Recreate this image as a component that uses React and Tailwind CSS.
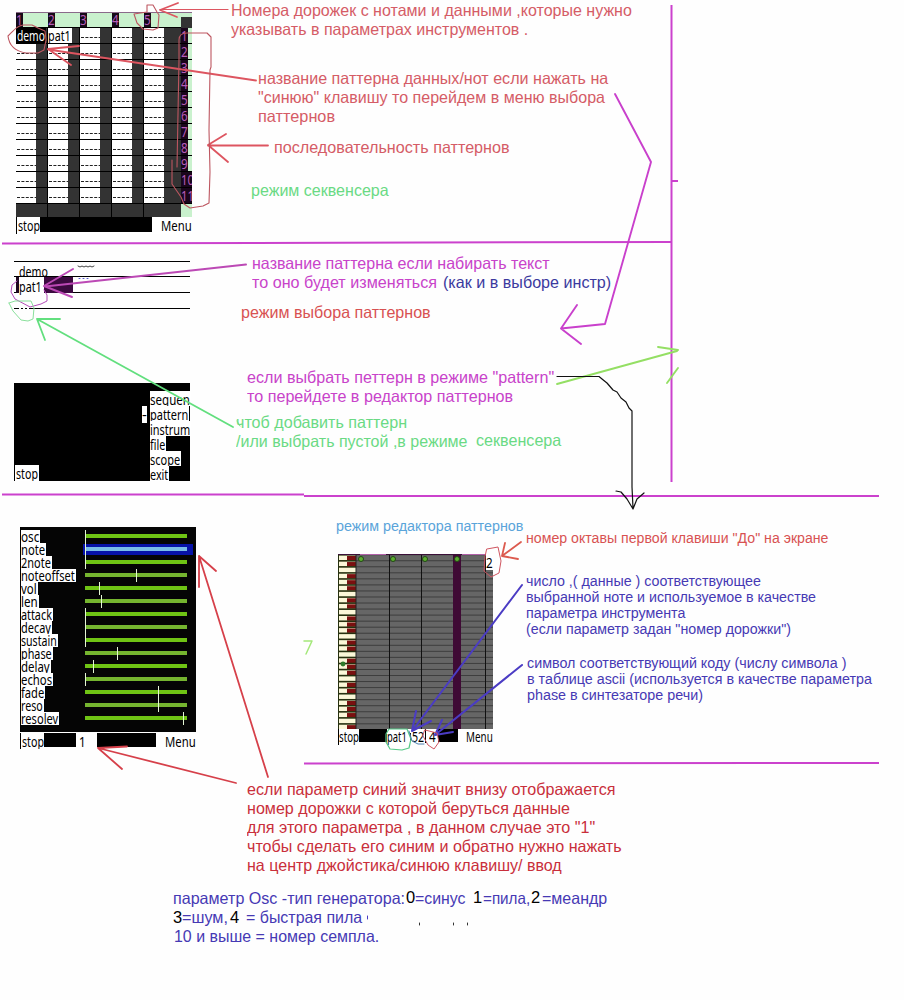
import { useLayoutEffect, useRef, useState } from "react";

/* Text squeezed or stretched horizontally to an exact width. */
function Fit({ w, className = "", children }) {
  const ref = useRef(null);
  const [scale, setScale] = useState(1);
  useLayoutEffect(() => {
    const natural = ref.current.offsetWidth;
    if (natural) setScale(w / natural);
  }, [w, children]);
  return (
    <span className="block overflow-visible" style={{ width: w }}>
      <span
        ref={ref}
        className={"inline-block origin-left whitespace-pre " + className}
        style={{ transform: `scaleX(${scale})` }}
      >
        {children}
      </span>
    </span>
  );
}

const salmon = "text-[#d55c66]";
const green = "text-[#6ada84]";
const magenta = "text-[#c843ca]";
const indigo = "text-[#4639b4]";
const red = "text-[#c92f3b]";
const coral = "text-[#d85252]";
const big = "text-[16.5px] leading-[19px]";
const small = "text-[14px] leading-4";

/* Notes on the canvas: [x, baseline, width, size, colour, text] */
const notes = [
  [231, 16, 401, big, salmon, "Номера дорожек с нотами и данными ,которые нужно"],
  [231, 35, 297, big, salmon, "указывать в параметрах инструментов ."],
  [258, 84, 350, big, salmon, "название паттерна данных/нот если нажать на"],
  [258, 103, 347, big, salmon, "\"синюю\" клавишу то перейдем в меню выбора"],
  [258, 122, 77, big, salmon, "паттернов"],
  [274, 153, 236, big, salmon, "последовательность паттернов"],
  [251, 196, 138, big, green, "режим секвенсера"],
  [252, 269, 298, big, magenta, "название паттерна если набирать текст"],
  [252, 288, 185, big, magenta, "то оно будет изменяться"],
  [443, 288, 168, big, "text-[#3b3a9e]", "(как и в выборе инстр)"],
  [241, 318, 190, big, coral, "режим выбора паттернов"],
  [247, 383, 307, big, magenta, "если выбрать петтерн в режиме \"pattern\""],
  [247, 402, 266, big, magenta, "то перейдете в редактор паттернов"],
  [236, 428, 171, big, green, "чтоб добавить паттерн"],
  [236, 447, 232, big, green, "/или выбрать пустой ,в режиме"],
  [476, 446, 85, big, green, "секвенсера"],
  [336, 531, 187, small, "text-[#5aa4da]", "режим редактора паттернов"],
  [526, 543, 303, small, coral, "номер октавы первой клавиши \"До\" на экране"],
  [526, 586, 235, small, indigo, "число ,( данные ) соответствующее"],
  [526, 602, 290, small, indigo, "выбранной ноте и используемое в качестве"],
  [526, 618, 159, small, indigo, "параметра инструмента"],
  [526, 634, 265, small, indigo, "(если параметр задан \"номер дорожки\")"],
  [527, 668, 319, small, indigo, "символ соответствующий коду (числу символа )"],
  [527, 684, 345, small, indigo, "в таблице ascii (используется в качестве параметра"],
  [527, 700, 176, small, indigo, "phase в синтезаторе речи)"],
  [247, 795, 369, big, red, "если параметр синий значит внизу отображается"],
  [247, 814, 323, big, red, "номер дорожки с которой беруться данные"],
  [247, 833, 348, big, red, "для этого параметра , в данном случае это \"1\""],
  [247, 852, 375, big, red, "чтобы сделать его синим и обратно нужно нажать"],
  [247, 871, 315, big, red, "на центр джойстика/синюю клавишу/ ввод"],
  [173, 904, 232, big, indigo, "параметр Osc -тип генератора:"],
  [406, 903, 9, big, "text-black", "0"],
  [415, 904, 51, big, indigo, "=синус"],
  [473, 903, 9, big, "text-black", "1"],
  [483, 904, 47, big, indigo, "=пила,"],
  [531, 903, 9, big, "text-black", "2"],
  [542, 904, 65, big, indigo, "=меандр"],
  [173, 923, 9, big, "text-black", "3"],
  [182, 923, 46, big, indigo, "=шум,"],
  [230, 923, 9, big, "text-black", "4"],
  [246, 923, 116, big, indigo, "= быстрая пила"],
  [174, 942, 205, big, indigo, "10 и выше = номер семпла."],
];

function Note({ note }) {
  const [x, baseline, w, size, color, text] = note;
  const top = baseline - (size === big ? 15 : 13);
  return (
    <div className={"absolute " + size + " " + color} style={{ left: x, top }}>
      <Fit w={w}>{text}</Fit>
    </div>
  );
}

const lcd = "font-['Noto_Sans','Open_Sans',sans-serif] text-[15px]";

function Label({ w, box, className = "", children }) {
  return (
    <div
      className={"shrink-0 overflow-hidden whitespace-pre " + className}
      style={{ width: box || w + 1 }}
    >
      <Fit w={w}>{children}</Fit>
    </div>
  );
}

function Sequencer() {
  const tracks = [1, 2, 3, 4, 5];
  const rows = Array.from({ length: 11 }, (_, i) => i + 1);
  return (
    <div className={"absolute left-4 top-3 w-44 h-[222px] overflow-hidden bg-white " + lcd}>
      <div className="flex h-4 w-full border-t border-b border-t-[#8a6a8a] border-b-black bg-[#c9f1cd]">
        {tracks.map((n) => (
          <div key={n} className="w-8 shrink-0">
            <div className="h-[14px] w-[7px] overflow-hidden bg-[#160a18] leading-[13px] text-[#b75cb8]">
              <Fit w={7}>{n}</Fit>
            </div>
          </div>
        ))}
        <div className="mt-1 ml-[5px] h-3 w-[11px] bg-[#333]" />
      </div>
      {rows.map((n) => (
        <div key={n} className="flex h-4 border-b border-black bg-[#333] leading-[15px]">
          {tracks.map((t) => (
            <div key={t} className={"flex w-8 shrink-0 border-black " + (t < 5 ? "border-r" : "")}>
              {n === 1 && t === 1 ? (
                <Label w={28} box={30} className="h-[15px] bg-black pl-px text-white">demo</Label>
              ) : n === 1 && t === 2 ? (
                <Label w={23} box={24} className="h-[15px] bg-white text-black">pat1</Label>
              ) : (
                <svg width="20" height="15" className="bg-white">
                  <path d="M1 9.5H20" stroke="#222" strokeDasharray="3 1.4" />
                </svg>
              )}
            </div>
          ))}
          <div className="ml-[5px] flex w-[11px] overflow-hidden bg-[#c9f1cd]">
            <div className={"h-4 shrink-0 overflow-hidden bg-[#1a061c] text-[#b75cb8] " + (n > 9 ? "w-[11px]" : "w-[7px]")}>
              <Fit w={n > 9 ? 13 : 7}>{n}</Fit>
            </div>
          </div>
        </div>
      ))}
      <div className="flex h-[13px] bg-[#333]">
        {tracks.map((t) => (
          <div key={t} className={"w-8 border-black " + (t < 5 ? "border-r" : "")} />
        ))}
        <div className="ml-[5px] w-[11px] bg-[#c9f1cd]" />
      </div>
      <div className="flex h-[17px] items-start leading-[16px]">
        <Label w={22} box={24} className="h-[17px] border-l border-black pl-px">stop</Label>
        <div className="h-[15px] w-28 bg-black" />
        <div className="ml-[9px]"><Fit w={31}>Menu</Fit></div>
      </div>
    </div>
  );
}

function PatternPicker() {
  const menu = [
    ["sequen", 40],
    ["pattern", 38],
    ["instrum", 40],
    ["file", 15],
    ["scope", 30],
    ["exit", 18],
  ];
  return (
    <div className={"absolute left-[14px] top-[261px] w-44 " + lcd}>
      <div className="h-[15px] border-t border-black pl-[5px] leading-[18px]">
        <Fit w={29}>demo</Fit>
      </div>
      <div className="flex h-4 border-t border-black leading-[18px]">
        <div className="ml-[2px] h-4 w-[3px] bg-[#200820]" />
        <Label w={23} box={25} className="h-[18px] bg-white">pat1</Label>
        <div className="h-4 w-[29px] bg-[#3c0a40]" />
      </div>
      <div className="h-4 border-t border-black" />
      <div className="h-[75px] border-t border-black" />
      <div className="flex h-[98px] justify-between bg-black">
        <div className="mt-auto h-4 border-l border-black leading-4">
          <Label w={22} box={24} className="h-4 bg-white pl-px">stop</Label>
        </div>
        <div className="flex pt-2">
          <div className="mr-[3px] mt-[15px] h-[17px] w-[5px] bg-white leading-4">
            <Fit w={5}>-</Fit>
          </div>
          <div className="w-10 leading-4">
            {menu.map(([name, w]) => (
              <div key={name} className="h-[15px]">
                <Label w={w} className="h-[15px] bg-white">{name}</Label>
              </div>
            ))}
          </div>
        </div>
      </div>
    </div>
  );
}

function Instrument() {
  const params = [
    ["osc", 18, 0],
    ["note", 24, 0],
    ["2note", 30, 0],
    ["noteoffset", 54, 51],
    ["vol", 16, 14],
    ["len", 17, 16],
    ["attack", 31, 0],
    ["decay", 30, 0],
    ["sustain", 36, 0],
    ["phase", 31, 32],
    ["delay", 29, 8],
    ["echos", 31, 0],
    ["fade", 23, 73],
    ["reso", 22, 73],
    ["resolev", 37, 98],
  ];
  return (
    <div className={"absolute left-5 top-[527px] w-44 " + lcd}>
      <div className="h-[205px] border-l border-black bg-[#050505] pt-[3px]">
        {params.map(([name, w, at], i) => (
          <div key={name} className="flex h-[13px] items-center">
            <div className="h-[13px] w-[62px] leading-[12px]">
              <Label w={w} className="h-[13px] bg-white">{name}</Label>
            </div>
            <div
              className={
                "flex h-[11px] w-[110px] items-center pl-[2px] " +
                (i === 1 ? "bg-[#0712a8]" : "")
              }
            >
              <svg width="104" height="13" viewBox="0 0 104 13" className="shrink-0 overflow-visible">
                <rect x="0" y="4" width="102" height="4" fill={i === 1 ? "#79bde8" : i % 2 ? "#75b52f" : "#6fc414"} />
                <path d={`M${at + 0.5} 0V13`} stroke="#e4f6d4" />
              </svg>
            </div>
          </div>
        ))}
      </div>
      <div className="flex h-[16px] pt-px leading-[16px]">
        <Label w={22} box={24} className="h-[16px] border-l border-black pl-px">stop</Label>
        <div className="h-[14px] w-8 bg-black" />
        <div className="w-[21px] pl-[3px]"><Fit w={7}>1</Fit></div>
        <div className="h-[14px] w-[59px] bg-black" />
        <div className="ml-[9px]"><Fit w={31}>Menu</Fit></div>
      </div>
    </div>
  );
}

function PatternEditor() {
  const rows = Array.from({ length: 29 }, (_, i) => i);
  const sharp = [true, true, false, true, true, true, false];
  return (
    <div className={"absolute left-[338px] top-[554px] w-[155px] " + lcd}>
      <svg width="155" height="175" className="block bg-[#666]">
        <rect width="18" height="175" fill="#fbf7d8" />
        {rows.map((i) => (
          <g key={i}>
            <rect x="0" y={i * 6.04} width="18" height="1.6" fill="#26300f" />
            <rect x="18" y={i * 6.04 + 0.2} width="137" height="1" fill="#3e3e3e" />
            {sharp[i % 7] && <rect x="9" y={i * 6.04 + 2} width="9" height="4.4" fill="#7a1010" />}
          </g>
        ))}
        <rect width="1" height="175" fill="#26300f" />
        <rect x="17.5" width="1" height="175" fill="#222" />
        <path d="M51.5 0V175M83.5 0V175M147.5 0V175" stroke="#111" />
        <rect x="115" width="8" height="175" fill="#3f0a35" />
        <path d="M0 .5H155" stroke="#3a1038" />
        <path d="M22 .5H48M124 .5H147" stroke="#b060a8" />
        <g fill="#5cae30" stroke="#214a12">
          <circle cx="23" cy="5" r="2.5" />
          <circle cx="55" cy="5" r="2.5" />
          <circle cx="87" cy="5" r="2.5" />
          <circle cx="119" cy="5" r="2.5" />
        </g>
        <circle cx="5" cy="110" r="2.4" fill="#2f7a2a" />
      </svg>
      <div className="absolute left-[148px] top-0 h-4 w-[7px] bg-white leading-4">
        <Fit w={7}>2</Fit>
      </div>
      <div className="flex h-[14px] leading-[15px]">
        <Label w={20} box={21} className="h-[16px] border-l border-black">stop</Label>
        <div className="h-[13px] w-[28px] bg-black" />
        <Label w={20} box={23} className="h-[16px] bg-white">pat1</Label>
        <div className="mt-1 h-[9px] w-px bg-black" />
        <Label w={12} box={14} className="h-[15px] bg-white pl-px">52</Label>
        <div className="h-[14px] w-px bg-black" />
        <div className="w-[12px] pl-[3px]"><Fit w={7}>4</Fit></div>
        <div className="h-[13px] w-[20px] bg-black" />
        <div className="ml-2"><Fit w={27}>Menu</Fit></div>
      </div>
    </div>
  );
}

function Markup() {
  return (
    <svg
      className="absolute left-0 top-0"
      width="904"
      height="1000"
      viewBox="0 0 904 1000"
      fill="none"
      strokeLinecap="round"
      strokeLinejoin="round"
    >
      {/* section dividers */}
      <g stroke="#cb41cd" strokeWidth="2" strokeLinecap="butt">
        <path d="M2 243.5L671 242" />
        <path d="M671.5 5V482" />
        <path d="M671 181H678" />
        <path d="M2 494.5H304" />
        <path d="M304 496H879" />
        <path d="M304 763.5L879 763" />
      </g>
      {/* sequencer call-outs */}
      <g stroke="#dd5560" strokeWidth="1.8">
        <path strokeWidth="1.2" d="M228 9.5H160" />
        <path d="M178 3L160 10L177 17" />
        <path d="M256 80.5L48 49.5M79 46L48 49L71 65" />
        <path d="M268 145.5H208M226 134L208 145L228 162" />
      </g>
      <g stroke="#bd5660" strokeWidth="1.1">
        <path d="M23 25C17 26 14 30 8 36C9 45 14 51 26 53H38L44 50L46 40L45 31L38 28L32 25H23" />
        <path d="M134 14L147 12V5L153 5L157 12L159 15L158 28L153 30L143 29L137 23L134 14Z" />
        <path d="M177 167L179 60V40C179 35 182 33 187 33H207L211 37V67L210 70L209 130L210 172L209 203L203 206L190 208L184 204L181 197L172 184V160" />
      </g>
      {/* path from sequencer to pattern picker */}
      <path
        stroke="#c940cc"
        strokeWidth="1.9"
        d="M615 94L651 162L605 324L561 328.5M577 305L561 328.5L581 344"
      />
      {/* pattern picker call-outs */}
      <path stroke="#bc49b5" strokeWidth="2" d="M246 264.5L45 286.5M73 269L44 286L72 297" />
      <path stroke="#b44cb8" d="M17 281L12 285L11 292L15 299L30 307L41 304L47 301L47 295L44 290" />
      <path
        stroke="#62df7e"
        strokeWidth="1.8"
        d="M233 427L37 319M60 319L37 319L45 340"
      />
      <path stroke="#8ae09c" d="M9 303L15 301H31L34 308L33 319L28 321L21 320L13 311L9 303" />
      <path stroke="#74df8c" d="M237 421L240 426" />
      <path stroke="#444" d="M78 266l2 1l2-1l2 1l2-1l2 1l2-1l2 1l2-1" />
      <path stroke="#5a5ad0" strokeDasharray="1 3" d="M79 278.5H91" />
      <path stroke="#fff" strokeWidth="2" strokeDasharray="2 2" strokeLinecap="butt" d="M19 308.5H31" />
      <path stroke="#94df64" strokeWidth="1.9" d="M557 384L677 351M658 347L678 350M667 383L678 368" />
      <path stroke="#a4e87a" strokeWidth="1.5" d="M304 641H312L306 654" />
      <path
        stroke="#111"
        strokeWidth="1.2"
        d="M557 376.5H599L602 379L607 383L613 390L617 392L621 398L626 402L629 408L632 411V487L633 508M616 491L621 492L627 499L633 509L637 499L644 493"
      />
      {/* instrument call-outs */}
      <path
        stroke="#d6404a"
        strokeWidth="1.8"
        d="M268 777L199 556M199 587V556L216 571M236 783L98 748M127 746.5L98 748L122 769"
      />
      {/* pattern editor call-outs */}
      <path stroke="#dc5a4e" strokeWidth="1.8" d="M521 542L502 556M505 543L502 556L518 559" />
      <path stroke="#4b3cc4" strokeWidth="2" d="M522 585L412 731M416 711L412 731L431 721M522 665L435 735M442 720L435 735L453 732" />
      <path stroke="#cf5560" d="M487 549L498 547L501 561L499 573L491 577L484 571L485 557Z" />
      <path stroke="#55c987" strokeWidth="1.2" d="M389 729L407 729L411 739L409 748L402 750L390 749L386 742V734Z" />
      <path stroke="#4a7fae" d="M409 731L412 741L418 744H424" />
      <path stroke="#cf5560" d="M425 730L437 733L439 742L434 749L428 745L423 736Z" />
      {/* stray pen marks */}
      <path stroke="#4b3cc4" d="M367.5 916V919" />
      <path stroke="#333" d="M419.5 923V925M453.5 923V925M467.5 923V925" />
    </svg>
  );
}

export default function App() {
  return (
    <main className="relative h-[1000px] w-[904px] overflow-hidden bg-[#fefefe] font-['Liberation_Sans',Arial,sans-serif] text-black">
      <Sequencer />
      <PatternPicker />
      <Instrument />
      <PatternEditor />
      {notes.map((n) => (
        <Note key={n[0] + "-" + n[1]} note={n} />
      ))}
      <Markup />
    </main>
  );
}
